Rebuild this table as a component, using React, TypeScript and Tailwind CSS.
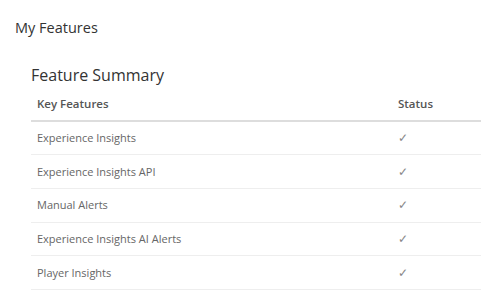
import React from "react";

const features = [
  "Experience Insights",
  "Experience Insights API",
  "Manual Alerts",
  "Experience Insights AI Alerts",
  "Player Insights",
];

export default function App() {
  return (
    <div className="min-h-screen bg-white font-['Open_Sans',sans-serif] text-[#333]">
      <div className="pl-[15px] pt-[18px]">
        <h1 className="text-[14.5px] leading-[20px] text-[#333]">My Features</h1>
        <div className="pl-4 pt-[25px]">
          <h2 className="text-[16px] leading-[24px] text-[#333]">Feature Summary</h2>
          <table className="w-[450px] border-collapse text-[11px] leading-[16px]">
            <thead>
              <tr className="border-b-2 border-[#ddd]">
                <th className="h-[34px] pl-[6px] text-left text-[11.5px] font-semibold text-[#555]">Key Features</th>
                <th className="w-[89px] pl-[6px] text-left text-[11.5px] font-semibold text-[#555]">Status</th>
              </tr>
            </thead>
            <tbody>
              {features.map((f) => (
                <tr key={f} className="border-b border-[#eee]">
                  <td className="h-[33.7px] pl-[6px] text-[#666]">{f}</td>
                  <td className="pl-[6px] text-[12px] text-[#888]">✓</td>
                </tr>
              ))}
            </tbody>
          </table>
        </div>
      </div>
    </div>
  );
}
